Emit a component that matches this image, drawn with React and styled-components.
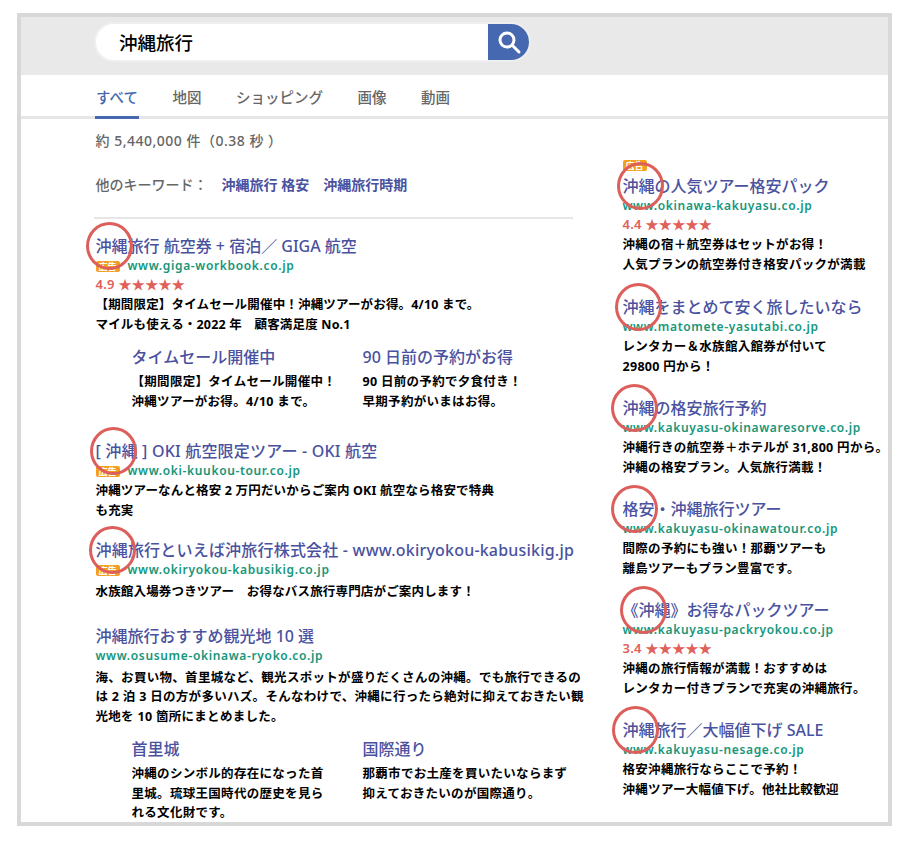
import React from 'react'
import styled, { createGlobalStyle } from 'styled-components'

const GlobalStyle = createGlobalStyle`
    html, body {
        margin: 0;
        padding: 0;
        background: #fff;
        font-family: "Noto Sans", "Noto Sans CJK JP", sans-serif;
    }
`

const tabs = ['すべて', '地図', 'ショッピング', '画像', '動画']

const leftAds = [
    {
        title: '沖縄旅行 航空券 + 宿泊／ GIGA 航空',
        url: 'www.giga-workbook.co.jp',
        badge: true,
        rating: '4.9',
        circle: -10,
        gap: 29,
        tight: true,
        lines: ['【期間限定】タイムセール開催中！沖縄ツアーがお得。4/10 まで。', 'マイルも使える・2022 年　顧客満足度 No.1'],
        subs: [
            { title: 'タイムセール開催中', lines: ['【期間限定】タイムセール開催中！', '沖縄ツアーがお得。4/10 まで。'] },
            { title: '90 日前の予約がお得', lines: ['90 日前の予約で夕食付き！', '早期予約がいまはお得。'] },
        ],
    },
    {
        title: '[ 沖縄 ] OKI 航空限定ツアー - OKI 航空',
        url: 'www.oki-kuukou-tour.co.jp',
        badge: true,
        circle: -6,
        gap: 19,
        spacing: 0.2,
        descTop: 2,
        tight: true,
        lines: ['沖縄ツアーなんと格安 2 万円だいからご案内 OKI 航空なら格安で特典', 'も充実'],
    },
    {
        title: '沖縄旅行といえば沖旅行株式会社 - www.okiryokou-kabusikig.jp',
        url: 'www.okiryokou-kabusikig.co.jp',
        badge: true,
        circle: -7,
        gap: 23,
        spacing: 0.2,
        descTop: 4,
        tight: true,
        lines: ['水族館入場券つきツアー　お得なバス旅行専門店がご案内します！'],
    },
    {
        title: '沖縄旅行おすすめ観光地 10 選',
        url: 'www.osusume-okinawa-ryoko.co.jp',
        gap: 20,
        descTop: 4,
        lines: [
            '海、お買い物、首里城など、観光スポットが盛りだくさんの沖縄。でも旅行できるの',
            'は 2 泊 3 日の方が多いハズ。そんなわけで、沖縄に行ったら絶対に抑えておきたい観',
            '光地を 10 箇所にまとめました。',
        ],
        subs: [
            { title: '首里城', lines: ['沖縄のシンボル的存在になった首', '里城。琉球王国時代の歴史を見ら', 'れる文化財です。'] },
            { title: '国際通り', lines: ['那覇市でお土産を買いたいならまず', '抑えておきたいのが国際通り。'] },
        ],
    },
]

const rightAds = [
    {
        title: '沖縄の人気ツアー格安パック',
        url: 'www.okinawa-kakuyasu.co.jp',
        rating: '4.4',
        circle: -6,
        gap: 22,
        lines: ['沖縄の宿＋航空券はセットがお得！', '人気プランの航空券付き格安パックが満載'],
    },
    {
        title: '沖縄をまとめて安く旅したいなら',
        url: 'www.matomete-yasutabi.co.jp',
        circle: -8,
        descTop: 2,
        lines: ['レンタカー＆水族館入館券が付いて', '29800 円から！'],
    },
    {
        title: '沖縄の格安旅行予約',
        url: 'www.kakuyasu-okinawaresorve.co.jp',
        circle: -12,
        descTop: 2,
        lines: ['沖縄行きの航空券＋ホテルが 31,800 円から。', '沖縄の格安プラン。人気旅行満載！'],
    },
    {
        title: '格安・沖縄旅行ツアー',
        url: 'www.kakuyasu-okinawatour.co.jp',
        circle: -12,
        descTop: 2,
        lines: ['間際の予約にも強い！那覇ツアーも', '離島ツアーもプラン豊富です。'],
    },
    {
        title: '《沖縄》お得なパックツアー',
        url: 'www.kakuyasu-packryokou.co.jp',
        rating: '3.4',
        circle: -3,
        lines: ['沖縄の旅行情報が満載！おすすめは', 'レンタカー付きプランで充実の沖縄旅行。'],
    },
    {
        title: '沖縄旅行／大幅値下げ SALE',
        url: 'www.kakuyasu-nesage.co.jp',
        circle: -11,
        descTop: 2,
        lines: ['格安沖縄旅行ならここで予約！', '沖縄ツアー大幅値下げ。他社比較歓迎'],
    },
]

const Ad = ({ ad }) => (
    <AdBlock $gap={ad.gap}>
        <AdTitle $spacing={ad.spacing}>
            {ad.circle !== undefined && <Circle $x={ad.circle} />}
            {ad.title}
        </AdTitle>
        <UrlRow>
            {ad.badge && <Badge>広告</Badge>}
            <Url>{ad.url}</Url>
        </UrlRow>
        {ad.rating && <Rating>{ad.rating} ★★★★★</Rating>}
        <Desc $top={ad.descTop} $tight={ad.tight}>
            {ad.lines.map(line => <div key={line}>{line}</div>)}
        </Desc>
        {ad.subs && (
            <SubGrid>
                {ad.subs.map(sub => (
                    <div key={sub.title}>
                        <SubTitle>{sub.title}</SubTitle>
                        <Desc $top={3}>
                            {sub.lines.map(line => <div key={line}>{line}</div>)}
                        </Desc>
                    </div>
                ))}
            </SubGrid>
        )}
    </AdBlock>
)

const App = () => {
    return (
        <Page>
            <GlobalStyle />
            <Frame>
                <SearchHeader>
                    <SearchBox>
                        <SearchText>沖縄旅行</SearchText>
                        <SearchButton>
                            <svg width="26" height="26" viewBox="0 0 26 26" fill="none" stroke="#fff" strokeWidth="3" strokeLinecap="round">
                                <circle cx="11" cy="11" r="7" />
                                <path d="M16.5 16.5 L23 23" />
                            </svg>
                        </SearchButton>
                    </SearchBox>
                </SearchHeader>
                <TabBar>
                    {tabs.map((tab, i) => <Tab key={tab} $active={i === 0}>{tab}</Tab>)}
                </TabBar>
                <Columns>
                    <LeftColumn>
                        <Stats>約 5,440,000 件（0.38 秒 ）</Stats>
                        <Keywords>
                            <span>他のキーワード：</span>
                            <KeywordLink>沖縄旅行 格安</KeywordLink>
                            <KeywordLink>沖縄旅行時期</KeywordLink>
                        </Keywords>
                        <Divider />
                        {leftAds.map(ad => <Ad key={ad.url} ad={ad} />)}
                    </LeftColumn>
                    <RightColumn>
                        <Badge>広告</Badge>
                        {rightAds.map(ad => <Ad key={ad.url} ad={ad} />)}
                    </RightColumn>
                </Columns>
            </Frame>
        </Page>
    )
}

const Page = styled.div`
    width: 910px;
    height: 844px;
    padding: 13px 0 0 17px;
    box-sizing: border-box;
    overflow: hidden;
`

const Frame = styled.div`
    width: 875px;
    height: 813px;
    box-sizing: border-box;
    border: 4px solid #d8d8d8;
    overflow: hidden;
    background: #fff;
`

const SearchHeader = styled.div`
    height: 58px;
    background: #e9e9e9;
    padding: 5px 0 0 73px;
    box-sizing: border-box;
`

const SearchBox = styled.div`
    width: 437px;
    height: 40px;
    box-sizing: border-box;
    border: 2px solid #efefef;
    border-radius: 20px;
    background: #fff;
    display: flex;
    align-items: center;
    justify-content: space-between;
    overflow: hidden;
`

const SearchText = styled.div`
    padding-left: 23px;
    font-size: 18.5px;
    font-weight: 500;
    color: #000;
`

const SearchButton = styled.div`
    width: 41px;
    height: 36px;
    background: #4568b0;
    display: flex;
    align-items: center;
    justify-content: center;
`

const TabBar = styled.div`
    height: 44px;
    box-sizing: border-box;
    border-bottom: 3px solid #e6e6e6;
    padding-left: 74px;
    display: flex;
    gap: 32.5px;
`

const Tab = styled.div`
    height: 44px;
    box-sizing: border-box;
    padding: 11px 1px 0;
    font-size: 14.5px;
    font-weight: 500;
    color: ${p => p.$active ? '#4568b0' : '#666'};
    border-bottom: 3px solid ${p => p.$active ? '#4568b0' : 'transparent'};
`

const Columns = styled.div`
    display: grid;
    grid-template-columns: 527px 1fr;
    padding-left: 74.5px;
`

const LeftColumn = styled.div`
    padding-top: 12px;
`

const RightColumn = styled.div`
    padding-top: 41px;
`

const Stats = styled.div`
    font-size: 14px;
    line-height: 20px;
    font-weight: 500;
    letter-spacing: .5px;
    color: #666;
`

const Keywords = styled.div`
    margin-top: 24px;
    font-size: 14px;
    line-height: 20px;
    font-weight: 500;
    color: #666;
    display: flex;
    gap: 14px;
`

const KeywordLink = styled.span`
    color: #4a52a0;
    font-weight: 700;
`

const Divider = styled.div`
    width: 479px;
    height: 2px;
    margin: 22px 0 16px -2px;
    background: #e6e6e6;
`

const AdBlock = styled.div`
    margin-bottom: ${p => p.$gap ?? 21}px;
`

const AdTitle = styled.div`
    position: relative;
    font-size: 16px;
    line-height: 22px;
    font-weight: 500;
    letter-spacing: ${p => p.$spacing ?? 0}px;
    color: #4a52a0;
    white-space: nowrap;
`

const Circle = styled.span`
    position: absolute;
    left: ${p => p.$x}px;
    top: -13px;
    width: 47px;
    height: 48px;
    box-sizing: border-box;
    border: 3px solid #dc5f5c;
    border-radius: 50%;
`

const UrlRow = styled.div`
    display: flex;
    align-items: center;
    gap: 8px;
    height: 16px;
    margin-top: 1px;
`

const Badge = styled.span`
    display: block;
    width: 24px;
    height: 11px;
    border-radius: 2px;
    background: #f2a01e;
    color: #fff;
    font-size: 9px;
    line-height: 11px;
    font-weight: 700;
    text-align: center;

    ${RightColumn} > & {
        margin-bottom: 4px;
    }
`

const Url = styled.span`
    font-size: 12px;
    line-height: 16px;
    font-weight: 600;
    letter-spacing: .65px;
    color: #16967a;
`

const Rating = styled.div`
    font-size: 13px;
    line-height: 20px;
    font-weight: 600;
    letter-spacing: .3px;
    color: #e0605a;
`

const Desc = styled.div`
    margin-top: ${p => p.$top ?? 1}px;
    font-size: 12.5px;
    line-height: 19.5px;
    font-weight: 700;
    letter-spacing: ${p => p.$tight ? '.17px' : '.3px'};
    color: #000;
    white-space: nowrap;
`

const SubGrid = styled.div`
    display: grid;
    grid-template-columns: 231px 1fr;
    margin: 11px 0 0 36px;
`

const SubTitle = styled.div`
    font-size: 16px;
    line-height: 24px;
    font-weight: 500;
    color: #4a52a0;
`

export default App
